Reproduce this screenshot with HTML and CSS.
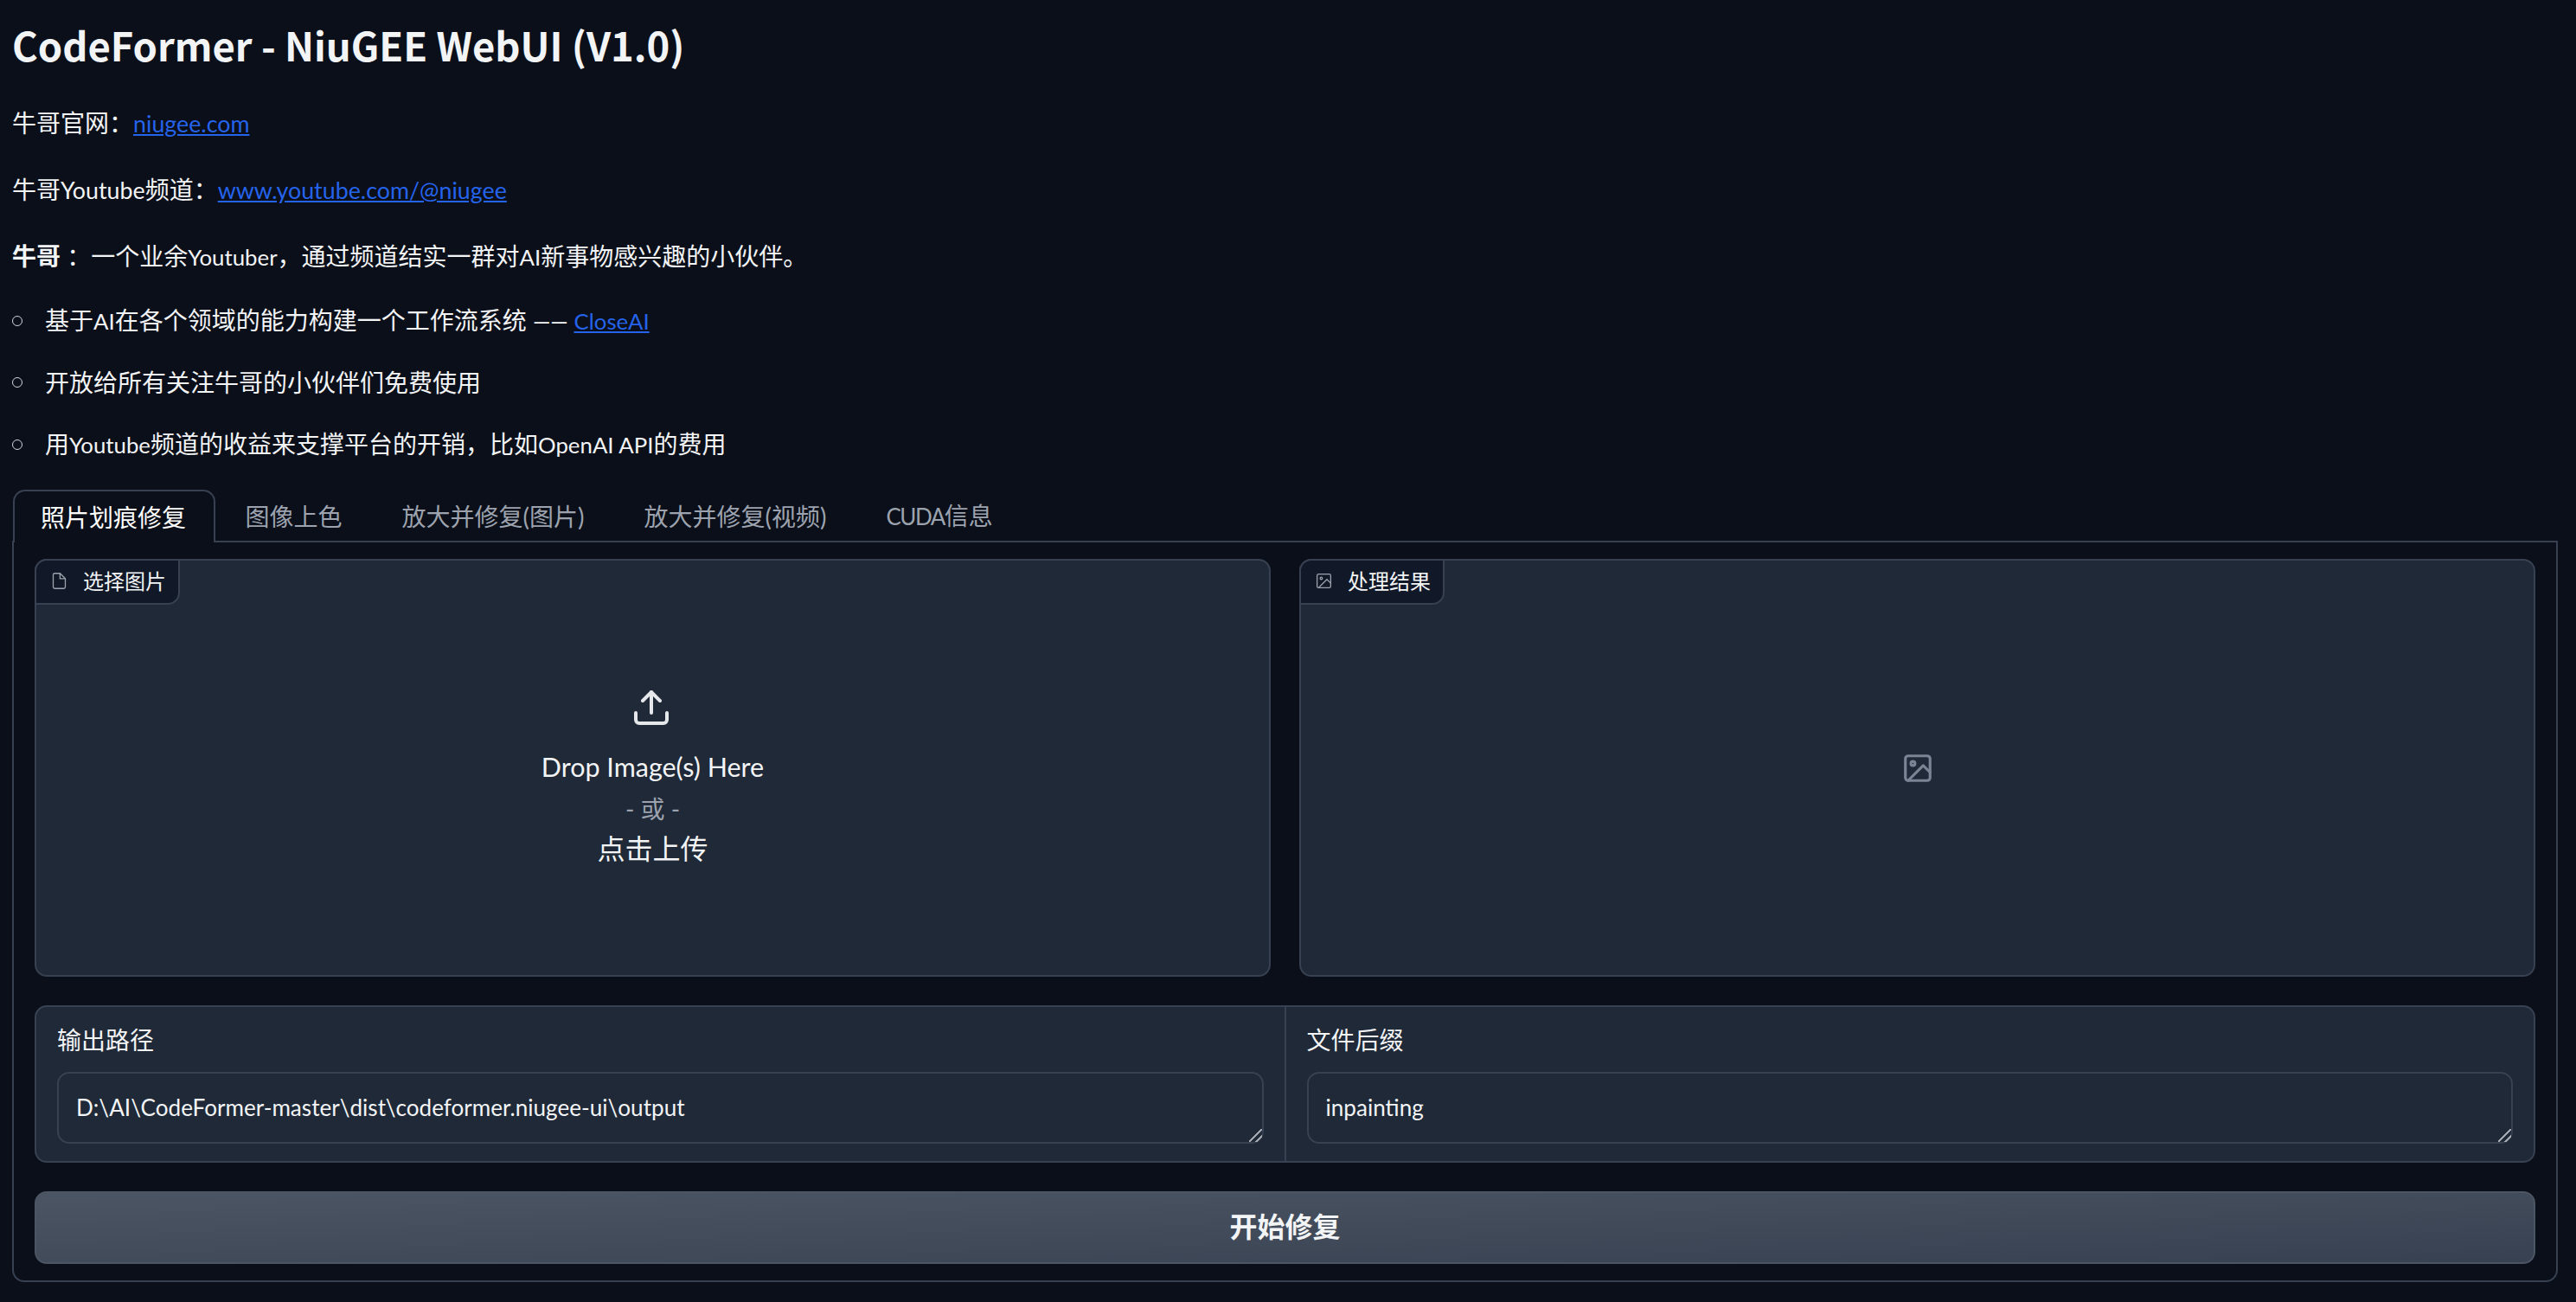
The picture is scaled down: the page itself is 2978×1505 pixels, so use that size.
FILE: index.html
```html
<!DOCTYPE html>
<html lang="zh-CN">
<head>
    <meta charset="UTF-8">
    <meta name="viewport" content="width=device-width, initial-scale=1.0">
    <title>CodeFormer - NiuGEE WebUI</title>
    <link rel="stylesheet" href="styles.css">
</head>
<body>
    <div class="prose">
        <h1>CodeFormer - NiuGEE WebUI (V1.0)</h1>
        <p>牛哥官网：<a class="en-wide" href="#">niugee.com</a></p>
        <p>牛哥<span class="en-wide">Youtube</span>频道：<a class="en-wide" href="#">www.youtube.com/@niugee</a></p>
        <p><strong>牛哥</strong> ：一个业余<span class="en">Youtuber</span>，通过频道结实一群对<span class="en">AI</span>新事物感兴趣的小伙伴。</p>
        <ul>
            <li><span>基于<span class="en">AI</span>在各个领域的能力构建一个工作流系统 <span class="en">—— </span><a class="en" href="#">CloseAI</a></span></li>
            <li><span>开放给所有关注牛哥的小伙伴们免费使用</span></li>
            <li><span>用<span class="en">Youtube</span>频道的收益来支撑平台的开销，比如<span class="en">OpenAI API</span>的费用</span></li>
        </ul>
    </div>

    <div class="tabs">
        <div class="tab-nav">
            <button type="button" class="tab selected">照片划痕修复</button>
            <button type="button" class="tab">图像上色</button>
            <button type="button" class="tab">放大并修复(图片)</button>
            <button type="button" class="tab">放大并修复(视频)</button>
            <button type="button" class="tab"><span class="caps">CUDA</span>信息</button>
        </div>

        <div class="tab-panel">
            <div class="image-row">
                <div class="block">
                    <div class="block-label">
                        <svg class="label-icon" viewBox="0 0 24 24"><path d="M13 2H6a2 2 0 0 0-2 2v16a2 2 0 0 0 2 2h12a2 2 0 0 0 2-2V9z"/><polyline points="13 2 13 9 20 9"/></svg>
                        <span>选择图片</span>
                    </div>
                    <div class="upload">
                        <svg class="upload-icon" viewBox="0 0 24 24"><path d="M21 15v4a2 2 0 0 1-2 2H5a2 2 0 0 1-2-2v-4"/><polyline points="17 8 12 3 7 8"/><line x1="12" y1="3" x2="12" y2="15"/></svg>
                        <div class="drop-text">Drop Image(s) Here</div>
                        <div class="or-text">- 或 -</div>
                        <div class="click-text">点击上传</div>
                    </div>
                </div>
                <div class="block">
                    <div class="block-label">
                        <svg class="label-icon" viewBox="0 0 24 24"><rect x="3" y="3" width="18" height="18" rx="2" ry="2"/><circle cx="8.5" cy="8.5" r="1.5"/><polyline points="21 15 16 10 5 21"/></svg>
                        <span>处理结果</span>
                    </div>
                    <div class="empty">
                        <svg class="empty-icon" viewBox="0 0 24 24"><rect x="3" y="3" width="18" height="18" rx="2" ry="2"/><circle cx="8.5" cy="8.5" r="1.5"/><polyline points="21 15 16 10 5 21"/></svg>
                    </div>
                </div>
            </div>

            <div class="form-row">
                <label class="field">
                    <span class="field-label">输出路径</span>
                    <textarea rows="1" spellcheck="false">D:\AI\CodeFormer-master\dist\codeformer.niugee-ui\output</textarea>
                </label>
                <label class="field">
                    <span class="field-label">文件后缀</span>
                    <textarea rows="1" spellcheck="false">inpainting</textarea>
                </label>
            </div>

            <button type="button" class="run-button">开始修复</button>
        </div>
    </div>
</body>
</html>
```

FILE: styles.css
```css
* {
    box-sizing: border-box;
}
body {
    margin: 0;
    padding: 0 21px 0 14px;
    background-color: #0b0f19;
    color: #f3f4f6;
    font-family: Lato, "Noto Sans CJK SC", sans-serif;
    font-size: 28px;
    line-height: 42px;
}
a {
    color: #2563eb;
}
.en {
    font-size: 25.8px;
}
.en-wide {
    font-size: 26.8px;
}
.caps {
    font-size: 26px;
    letter-spacing: -1.5px;
}

/* Top text */
.prose {
    height: 566px;
    padding-top: 19px;
}
h1 {
    margin: 0 0 38px;
    font-family: "Noto Sans CJK SC", sans-serif;
    font-size: 45.4px;
    font-weight: 600;
    line-height: 64px;
}
p {
    margin: 0 0 34px;
}
ul {
    margin: -3px 0 0;
    padding: 0;
    list-style: none;
}
li {
    display: flex;
    align-items: center;
    margin-bottom: 29px;
    white-space: pre;
}
li::before {
    content: "";
    flex: none;
    width: 10px;
    height: 10px;
    margin-right: 26px;
    border: 1.5px solid #d1d5db;
    border-radius: 50%;
}

/* Tabs */
.tab-nav {
    display: flex;
    height: 59px;
    padding-left: 1px;
}
.tab {
    height: 61px;
    padding: 0 34.5px;
    background: none;
    border: none;
    color: #9ca3af;
    font: inherit;
}
.tab.selected {
    position: relative;
    z-index: 1;
    padding: 0 32px 0 30px;
    background-color: #0b0f19;
    border: 2px solid #374151;
    border-bottom: none;
    border-radius: 14px 14px 0 0;
    color: #fff;
}
.tab-panel {
    display: flex;
    flex-direction: column;
    gap: 33px;
    padding: 19px 24px 19px 24px;
    border: 2px solid #374151;
    border-top-width: 2px;
    border-radius: 0 0 14px 14px;
}

/* Image blocks */
.image-row {
    display: flex;
    gap: 33px;
    height: 483px;
}
.block {
    position: relative;
    flex: 1;
    background-color: #1f2937;
    border: 2px solid #374151;
    border-radius: 14px;
}
.block-label {
    position: absolute;
    top: -2px;
    left: -2px;
    display: flex;
    align-items: center;
    gap: 17px;
    height: 53px;
    padding: 0 14px 2px 16px;
    background-color: #111827;
    border: 2px solid #374151;
    border-radius: 14px 0 14px 0;
    font-size: 24px;
    line-height: 32px;
}
.label-icon {
    width: 21px;
    height: 21px;
    fill: none;
    stroke: #9ca3af;
    stroke-width: 1.5;
}
.upload {
    display: flex;
    flex-direction: column;
    align-items: center;
    justify-content: center;
    height: 100%;
    padding-top: 22px;
}
.upload-icon {
    width: 48px;
    height: 48px;
    margin-right: 4px;
    margin-bottom: 19px;
    fill: none;
    stroke: #e5e7eb;
    stroke-width: 2;
    stroke-linecap: round;
    stroke-linejoin: round;
}
.drop-text {
    font-size: 30.5px;
    line-height: 50px;
}
.or-text {
    color: #9ca3af;
    line-height: 48px;
}
.click-text {
    font-size: 32px;
    line-height: 44px;
}
.empty {
    display: flex;
    align-items: center;
    justify-content: center;
    height: 100%;
}
.empty-icon {
    width: 38px;
    height: 38px;
    fill: none;
    stroke: #7b8494;
    stroke-width: 2;
    stroke-linecap: round;
    stroke-linejoin: round;
}

/* Text fields */
.form-row {
    display: flex;
    height: 182px;
    background-color: #1f2937;
    border: 2px solid #374151;
    border-radius: 14px;
}
.field {
    display: flex;
    flex: 1;
    flex-direction: column;
    padding: 17px 24px 0;
}
.field + .field {
    border-left: 2px solid #374151;
}
.field-label {
    margin-bottom: 16px;
    line-height: 42px;
}
textarea {
    display: block;
    width: 100%;
    height: 83px;
    padding: 19px 20px;
    background-color: #1f2937;
    border: 2px solid #374151;
    border-radius: 14px;
    color: #f3f4f6;
    font-family: inherit;
    font-size: 26.1px;
    line-height: 40px;
    outline: none;
    resize: vertical;
}
textarea::-webkit-resizer {
    background: linear-gradient(135deg, transparent 45%, #a3a8b0 45%, #a3a8b0 55%, transparent 55%, transparent 73%, #a3a8b0 73%, #a3a8b0 81%, transparent 81%);
}

/* Run button */
.run-button {
    height: 84px;
    padding-bottom: 8px;
    background: linear-gradient(to bottom right, #4b5563, #374151);
    border: 2px solid #4b5563;
    border-radius: 14px;
    color: #f3f4f6;
    font-family: inherit;
    font-size: 32px;
    font-weight: 600;
}
```
